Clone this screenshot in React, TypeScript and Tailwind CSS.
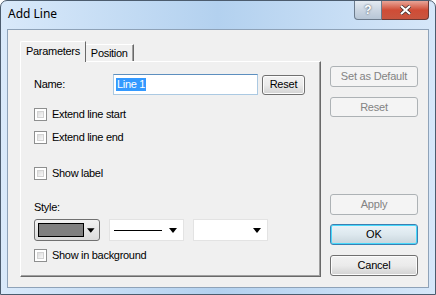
const font = { fontFamily: '"Liberation Sans", Arial, sans-serif' };

function CheckBox({ label }: { label: string }) {
  return (
    <div className="flex items-center gap-[5px] h-[13px]">
      <div className="w-[13px] h-[13px] border border-[#8e8f8f] bg-white p-[2px]">
        <div className="w-full h-full border border-[#d3d3d3] bg-gradient-to-br from-[#dcdcdc] to-[#f9f9f9]" />
      </div>
      <span className="text-[11px] leading-none tracking-[-0.3px] text-black">{label}</span>
    </div>
  );
}

function Btn({
  children,
  disabled,
  primary,
  className = "",
}: {
  children: React.ReactNode;
  disabled?: boolean;
  primary?: boolean;
  className?: string;
}) {
  if (disabled) {
    return (
      <div
        className={`flex items-center justify-center rounded-[3px] border border-[#adb2b5] bg-[#f4f4f4] text-[11px] tracking-[-0.2px] text-[#838383] ${className}`}
      >
        {children}
      </div>
    );
  }
  if (primary) {
    return (
      <div
        className={`flex items-center justify-center rounded-[3px] border border-[#3c7fb1] bg-gradient-to-b from-[#eaf3f8] via-[#dde8ee] to-[#c8d5dc] shadow-[inset_0_0_0_1px_#48d8fb] text-[11px] text-black ${className}`}
      >
        {children}
      </div>
    );
  }
  return (
    <div
      className={`flex items-center justify-center rounded-[3px] border border-[#707070] bg-gradient-to-b from-[#f2f2f2] via-[#ebebeb] to-[#d2d2d2] shadow-[inset_0_0_0_1px_#fcfcfc] text-[11px] tracking-[-0.2px] text-black ${className}`}
    >
      {children}
    </div>
  );
}

function Arrow() {
  return (
    <svg width="8" height="5" viewBox="0 0 8 5">
      <path d="M0 0h8L4 5z" fill="#000" />
    </svg>
  );
}

export default function App() {
  return (
    <div className="w-[436px] h-[295px] bg-white" style={font}>
      <div className="w-[436px] h-[295px] flex flex-col rounded-t-[7px] border border-[#4c5c6e] bg-gradient-to-r from-[#d9e9fa] via-[#b3d1ef] to-[#d6e7f9]">
        {/* title bar */}
        <div className="h-[28px] flex items-start justify-between pl-[7px] pr-[6px]">
          <span
            className="mt-[4px] text-[12px] text-black"
            style={{ fontFamily: '"Noto Sans", "Open Sans", sans-serif' }}
          >
            Add Line
          </span>
          <div className="flex">
            <div className="w-[28px] h-[19px] rounded-bl-[4px] border border-t-0 border-[#6b7b8c] bg-gradient-to-b from-[#e4ebf2] via-[#cbd6e2] to-[#b7c6d6] flex items-center justify-center text-[12px] font-bold text-white [text-shadow:0_0_2px_#2b3a4b]">
              ?
            </div>
            <div className="w-[47px] h-[19px] rounded-br-[4px] border border-l-0 border-t-0 border-[#6b3a36] bg-gradient-to-b from-[#e7a497] via-[#cf4c36] to-[#c8553f] flex items-center justify-center">
              <svg width="13" height="10" viewBox="0 0 13 10">
                <path d="M2 1l9 8M11 1l-9 8" stroke="#3b2a2a" strokeWidth="3.6" />
                <path d="M2 1l9 8M11 1l-9 8" stroke="#fff" strokeWidth="2.2" />
              </svg>
            </div>
          </div>
        </div>

        {/* client area */}
        <div className="mx-[6px] mb-[6px] flex-1 border border-[#8ea2b8] bg-[#f0f0f0] flex pl-[12px] pt-[11px]">
          {/* tab control */}
          <div className="w-[301px] flex flex-col">
            <div className="flex items-end h-[20px] relative z-10">
              <div className="h-[21px] -mb-[1px] px-[5px] border-t border-l border-white border-r border-r-[#696969] bg-[#f0f0f0] flex items-start pt-[3px] rounded-tl-[2px]">
                <span className="text-[11px] leading-[13px] tracking-[-0.3px]">Parameters</span>
              </div>
              <div className="h-[17px] px-[5px] border-t border-white border-r border-r-[#696969] shadow-[inset_-1px_0_0_#a0a0a0] bg-[#f0f0f0] flex items-start pt-[2px]">
                <span className="text-[11px] leading-[13px] tracking-[-0.3px]">Position</span>
              </div>
            </div>
            <div className="h-[216px] border-t border-l border-white border-r border-b border-r-[#696969] border-b-[#696969] shadow-[inset_-1px_-1px_0_#a0a0a0] flex flex-col pl-[13px]">
              <div className="mt-[12px] flex items-center h-[21px]">
                <span className="w-[79px] text-[11px] tracking-[-0.3px]">Name:</span>
                <div className="w-[145px] h-[21px] border border-[#abc9e2] border-t-[#5d8fbf] bg-white flex items-center pl-[2px]">
                  <span className="bg-[#3399ff] text-white text-[11px] leading-[13px] px-[1px] tracking-[-0.3px]">Line 1</span>
                </div>
                <Btn className="ml-[4px] w-[43px] h-[20px]">Reset</Btn>
              </div>
              <div className="mt-[13px]">
                <CheckBox label="Extend line start" />
              </div>
              <div className="mt-[10px]">
                <CheckBox label="Extend line end" />
              </div>
              <div className="mt-[23px]">
                <CheckBox label="Show label" />
              </div>
              <div className="mt-[21px] text-[11px] leading-[13px] tracking-[-0.3px]">Style:</div>
              <div className="mt-[5px] flex items-center gap-[9px] h-[22px]">
                <div className="w-[66px] h-[22px] rounded-[3px] border border-[#707070] bg-gradient-to-b from-[#f2f2f2] to-[#dcdcdc] flex items-center pl-[3px] pr-[4px] gap-[3px]">
                  <div className="w-[49px] h-[14px] border border-black bg-[#808080]" />
                  <Arrow />
                </div>
                <div className="w-[75px] h-[22px] border border-[#e3e3e3] bg-white flex items-center pl-[4px] pr-[6px] justify-between">
                  <div className="w-[48px] h-[1px] bg-black" />
                  <Arrow />
                </div>
                <div className="w-[75px] h-[22px] border border-[#e3e3e3] bg-white flex items-center justify-end pr-[6px]">
                  <Arrow />
                </div>
              </div>
              <div className="mt-[8px]">
                <CheckBox label="Show in background" />
              </div>
            </div>
          </div>

          {/* right buttons */}
          <div className="ml-[9px] w-[88px] flex flex-col">
            <Btn disabled className="mt-[25px] h-[21px]">Set as Default</Btn>
            <Btn disabled className="mt-[10px] h-[20px]">Reset</Btn>
            <Btn disabled className="mt-[77px] h-[21px]">Apply</Btn>
            <Btn primary className="mt-[9px] h-[21px]">OK</Btn>
            <Btn className="mt-[10px] h-[21px]">Cancel</Btn>
          </div>
        </div>
      </div>
    </div>
  );
}
